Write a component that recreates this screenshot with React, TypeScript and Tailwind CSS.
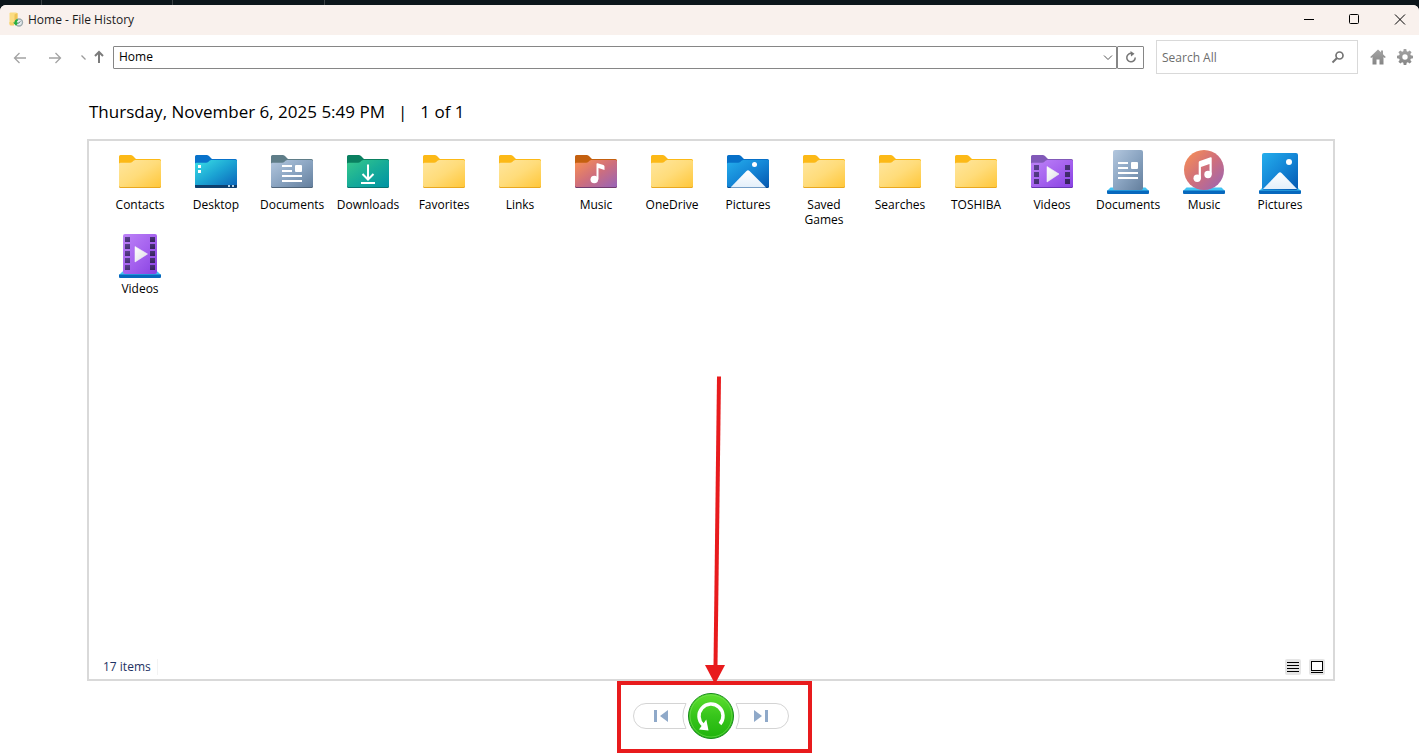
import React from "react"

type IconProps = { children?: React.ReactNode }

const places = [
  { name: "Contacts", icon: <Folder kind="plain" /> },
  { name: "Desktop", icon: <Folder kind="desktop" /> },
  { name: "Documents", icon: <Folder kind="documents" /> },
  { name: "Downloads", icon: <Folder kind="downloads" /> },
  { name: "Favorites", icon: <Folder kind="plain" /> },
  { name: "Links", icon: <Folder kind="plain" /> },
  { name: "Music", icon: <Folder kind="music" /> },
  { name: "OneDrive", icon: <Folder kind="plain" /> },
  { name: "Pictures", icon: <Folder kind="pictures" /> },
  { name: "Saved Games", icon: <Folder kind="plain" /> },
  { name: "Searches", icon: <Folder kind="plain" /> },
  { name: "TOSHIBA", icon: <Folder kind="plain" /> },
  { name: "Videos", icon: <Folder kind="videos" /> },
  { name: "Documents", icon: <DocumentsLibrary /> },
  { name: "Music", icon: <MusicLibrary /> },
  { name: "Pictures", icon: <PicturesLibrary /> },
  { name: "Videos", icon: <VideosLibrary /> }
]

// Shared gradients, referenced by id from every icon
const gradients = [
  { id: "g-plain", stops: ["#ffe69e", "#ffdc7a", "#ffc73a"] },
  { id: "g-desktop", stops: ["#3be0e6", "#1ba3d3", "#0a62b8"] },
  { id: "g-documents", stops: ["#b3c7de", "#8ba5c2", "#647f9d"] },
  { id: "g-downloads", stops: ["#37c98b", "#17ac98", "#0093a4"] },
  { id: "g-music", stops: ["#fb9251", "#cf6f7c", "#9763b8"] },
  { id: "g-pictures", stops: ["#25aeec", "#1486d6", "#0558b0"] },
  { id: "g-videos", stops: ["#bd83f7", "#a663ef", "#8741e2"] }
]

const folderColors: Record<string, { back: string; edge: string; front: string }> = {
  plain: { back: "#fcb917", edge: "#e9a820", front: "url(#g-plain)" },
  desktop: { back: "#0872ca", edge: "#0d3b66", front: "url(#g-desktop)" },
  documents: { back: "#5f7d88", edge: "#4f6479", front: "url(#g-documents)" },
  downloads: { back: "#0a8060", edge: "#07736f", front: "url(#g-downloads)" },
  music: { back: "#c4600f", edge: "#713b6d", front: "url(#g-music)" },
  pictures: { back: "#0770c8", edge: "#044a92", front: "url(#g-pictures)" },
  videos: { back: "#8159b8", edge: "#6934b4", front: "url(#g-videos)" }
}

function Gradients() {
  return (
    <svg className="absolute size-0" aria-hidden="true">
      <defs>
        {gradients.map((g) => (
          <linearGradient key={g.id} id={g.id} x1="0" y1="0" x2="1" y2="1">
            <stop offset="0" stopColor={g.stops[0]} />
            <stop offset="0.5" stopColor={g.stops[1]} />
            <stop offset="1" stopColor={g.stops[2]} />
          </linearGradient>
        ))}
        <linearGradient id="g-snow" x1="0" y1="0" x2="0" y2="1">
          <stop offset="0" stopColor="#ffffff" />
          <stop offset="1" stopColor="#e3effa" />
        </linearGradient>
        <linearGradient id="g-play" x1="0" y1="0" x2="1" y2="1">
          <stop offset="0" stopColor="#ffffff" />
          <stop offset="1" stopColor="#dcdce4" />
        </linearGradient>
        <linearGradient id="g-hole" x1="0" y1="0" x2="1" y2="1">
          <stop offset="0" stopColor="#5c4190" />
          <stop offset="1" stopColor="#34225c" />
        </linearGradient>
        <linearGradient id="g-restore" x1="0" y1="0" x2="0" y2="1">
          <stop offset="0" stopColor="#5ee02f" />
          <stop offset="0.5" stopColor="#37c51b" />
          <stop offset="1" stopColor="#1fb30c" />
        </linearGradient>
        <linearGradient id="g-gray" x1="0" y1="0" x2="0" y2="1">
          <stop offset="0" stopColor="#a4a4a4" />
          <stop offset="1" stopColor="#858585" />
        </linearGradient>
      </defs>
    </svg>
  )
}

function Icon48({ children }: IconProps) {
  return (
    <svg viewBox="0 0 48 48" className="size-12" aria-hidden="true">
      {children}
    </svg>
  )
}

function Glyph({ kind }: { kind: string }) {
  switch (kind) {
    case "desktop":
      return (
        <>
          <path d="M3 37H45V38.500Q45 40 43.500 40H4.500Q3 40 3 38.500Z" fill="#0d3f6e" />
          <path d="M6 17h3v3h-3zM6 22h3v3h-3z" fill="#fff" />
          <path d="M36 37h2v2h-2zM40 37h2v2h-2z" fill="#b5d2e8" />
        </>
      )
    case "documents":
      return (
        <>
          <path d="M14 17h10v2H14zM14 22h10v2H14zM14 27h20v2H14zM14 32h20v2H14z" fill="#fff" />
          <rect x="27" y="17" width="7" height="7" rx="1" fill="#fff" />
        </>
      )
    case "downloads":
      return (
        <path d="M24 16.500V31M18.500 26L24 31.500L29.500 26M17 35H31" fill="none" stroke="#fff" strokeWidth="2" />
      )
    case "music":
      return (
        <>
          <circle cx="22.300" cy="31.500" r="3.800" fill="#fff" />
          <path d="M24.500 31.500V16Q24.500 15 25.500 15.300L31.500 17Q32.500 17.500 32.500 18.500V22L26.500 20V31.500Z" fill="#fff" />
        </>
      )
    case "pictures":
      return (
        <>
          <path d="M6.500 39.500L22.500 23Q24 21.500 25.500 23L42 39.500Z" fill="url(#g-snow)" />
          <circle cx="30.500" cy="16.500" r="2.500" fill="#fff" />
        </>
      )
    case "videos":
      return (
        <>
          <path
            d="M6 17h5v5h-5zM6 24h5v5h-5zM6 31h5v5h-5zM37 17h5v5h-5zM37 24h5v5h-5zM37 31h5v5h-5z"
            fill="url(#g-hole)"
          />
          <path d="M19 18.500L31 26L19 34Z" fill="url(#g-play)" stroke="#f4f4f6" strokeWidth="0.600" strokeLinejoin="round" />
        </>
      )
    default:
      return null
  }
}

function Folder({ kind }: { kind: string }) {
  const colors = folderColors[kind]
  return (
    <Icon48>
      <path d="M3 8.500Q3 7 4.500 7H14.500Q16 7 17 8L20 11H43.500Q45 11 45 12.500V38H3Z" fill={colors.back} />
      <path d="M3 20H45V38.500Q45 40 43.500 40H4.500Q3 40 3 38.500Z" fill={colors.edge} />
      <path
        d="M3 16Q3 14.700 4.500 14.700H14Q15.500 14.700 16.500 13.800L17.500 12.800Q18.300 12 19.500 12H43.500Q45 12 45 13.500V37.500Q45 39 43.500 39H4.500Q3 39 3 37.500Z"
        fill={colors.front}
      />
      <Glyph kind={kind} />
    </Icon48>
  )
}

function Stand() {
  return (
    <>
      <path d="M6.500 39.500H41.500L45 43H3Z" fill="#43c4f4" />
      <path d="M3 42.500H45V45Q45 46 44 46H4Q3 46 3 45Z" fill="#0768bd" />
    </>
  )
}

function DocumentsLibrary() {
  return (
    <Icon48>
      <Stand />
      <rect x="9" y="2" width="30" height="40" rx="2" fill="url(#g-documents)" />
      <path d="M14 14h10v2H14zM14 19h10v2H14zM14 24h20v2H14zM14 29h20v2H14z" fill="#fff" />
      <rect x="27" y="14" width="7" height="7" rx="1" fill="#fff" />
    </Icon48>
  )
}

function MusicLibrary() {
  return (
    <Icon48>
      <Stand />
      <circle cx="24" cy="22" r="20" fill="url(#g-music)" />
      <circle cx="17.200" cy="30.300" r="3.700" fill="#fff" />
      <circle cx="28" cy="26.500" r="3.700" fill="#fff" />
      <path d="M18.700 30.300V14.500Q18.700 13.300 19.900 12.900L30.500 9.200Q31.700 8.900 31.700 10V26.500H29.500V16L20.900 19V30.300Z" fill="#fff" />
    </Icon48>
  )
}

function PicturesLibrary() {
  return (
    <Icon48>
      <Stand />
      <rect x="6" y="5" width="36" height="37" rx="2" fill="url(#g-pictures)" />
      <path d="M7 41L22.500 25Q24 23.500 25.500 25L41 41Z" fill="url(#g-snow)" />
      <circle cx="33" cy="14" r="3" fill="#fff" />
    </Icon48>
  )
}

function VideosLibrary() {
  return (
    <Icon48>
      <Stand />
      <rect x="7" y="2" width="34" height="40" rx="2" fill="url(#g-videos)" />
      {[5, 12, 19, 26, 33].map((y) => (
        <path key={y} d={`M9 ${y}h5v5h-5zM34 ${y}h5v5h-5z`} fill="url(#g-hole)" />
      ))}
      <path d="M19 14.500L31.500 22L19 30Z" fill="url(#g-play)" stroke="#f4f4f6" strokeWidth="0.600" strokeLinejoin="round" />
    </Icon48>
  )
}

function AppIcon() {
  return (
    <svg viewBox="0 0 16 16" className="size-4" aria-hidden="true">
      <path d="M1.500 1.500Q1.500 0.500 2.500 0.500H8Q9.500 0.500 9.500 2V12H1.500Z" fill="#fbdc82" />
      <path d="M6.500 2.500L9.500 1V9L6.500 12.500Z" fill="#eec355" />
      <path d="M1.500 10V12.500Q1.500 13.500 3 13.500H6V11Z" fill="#f7d06a" />
      <circle cx="11" cy="10.500" r="3.500" fill="#e4ebee" stroke="#a0abae" strokeWidth="1.400" />
      <path d="M9.500 7Q6.500 7.500 6.500 10.500H5L8 13.800L10.500 10.500H8.700Q8.800 9 10 8.600Z" fill="#27ad40" />
      <path d="M10 11.500L12.500 9.500" fill="none" stroke="#6e7b80" />
    </svg>
  )
}

function TitleBar() {
  return (
    <header className="flex h-[30px] items-center bg-[#f9f1ed] pl-2">
      <AppIcon />
      <h1 className="ml-1 flex-1 text-[12px] leading-4 text-[#1b1b1b]">Home - File History</h1>
      <button type="button" aria-label="Minimize" className="flex h-full w-[45px] items-center justify-center">
        <svg viewBox="0 0 12 12" className="size-3" aria-hidden="true">
          <path d="M0 5.500H10" stroke="#000" />
        </svg>
      </button>
      <button type="button" aria-label="Maximize" className="flex h-full w-[45px] items-center justify-center">
        <svg viewBox="0 0 12 12" className="size-3" fill="none" stroke="#000" aria-hidden="true">
          <rect x="0.500" y="0.500" width="9" height="9" rx="1" />
        </svg>
      </button>
      <button type="button" aria-label="Close" className="mr-[-3px] flex h-full w-[45px] items-center justify-center">
        <svg viewBox="0 0 12 12" className="size-3" stroke="#000" aria-hidden="true">
          <path d="M1 0.500L11 10.500M11 0.500L1 10.500" />
        </svg>
      </button>
    </header>
  )
}

function Toolbar() {
  return (
    <nav className="flex h-[44px] items-center pl-[13px] pr-[6px]">
      <button type="button" aria-label="Back">
        <svg viewBox="0 0 14 14" className="size-[14px]" fill="none" stroke="#a3a3a3" aria-hidden="true">
          <path d="M1.500 8H13M6.500 3L1.500 8L6.500 13" strokeWidth="1.300" />
        </svg>
      </button>
      <button type="button" aria-label="Forward" className="ml-[21px]">
        <svg viewBox="0 0 14 14" className="size-[14px]" fill="none" stroke="#a3a3a3" aria-hidden="true">
          <path d="M1 8H12.500M7.500 3L12.500 8L7.500 13" strokeWidth="1.300" />
        </svg>
      </button>
      <button type="button" aria-label="Recent locations" className="ml-[18px]">
        <svg viewBox="0 0 8 8" className="size-2" aria-hidden="true">
          <path d="M1.500 2.500L5.500 6.500" stroke="#9a9a9a" strokeWidth="1.200" />
        </svg>
      </button>
      <button type="button" aria-label="Up" className="ml-[5px]">
        <svg viewBox="0 0 12 14" className="h-[14px] w-3" fill="none" stroke="#7b7b7b" aria-hidden="true">
          <path d="M6 13V2M2 6L6 2L10 6" strokeWidth="2" />
        </svg>
      </button>
      <div className="ml-2 flex h-[23px] flex-1 items-center rounded-[1px] border border-[#868686]">
        <input
          type="text"
          aria-label="Address"
          defaultValue="Home"
          className="h-full min-w-0 flex-1 pb-px pl-[5px] text-[12px] leading-4 text-black outline-none"
        />
        <button type="button" aria-label="Previous locations" className="flex h-full w-4 items-center justify-center">
          <svg viewBox="0 0 10 10" className="size-[10px]" fill="none" stroke="#555" aria-hidden="true">
            <path d="M1 3.500L5 7.500L9 3.500" />
          </svg>
        </button>
      </div>
      <button
        type="button"
        aria-label="Refresh"
        className="flex h-[23px] w-[27px] items-center justify-center rounded-[1px] border border-[#868686]"
      >
        <svg viewBox="0 0 12 12" className="size-3" fill="none" aria-hidden="true">
          <path d="M7 2.500A4.200 4.200 0 1 0 10.200 6.500" stroke="#767676" strokeWidth="1.500" />
          <path d="M5.500 0L9.500 2.800L6 5.500Z" fill="#767676" />
        </svg>
      </button>
      <form className="ml-3 flex h-[34px] w-[202px] items-center border border-[#d9d9d9] pr-3" onSubmit={(e) => e.preventDefault()}>
        <input
          type="search"
          aria-label="Search All"
          placeholder="Search All"
          className="h-full min-w-0 flex-1 pl-[5px] text-[12px] leading-4 outline-none placeholder:text-[#6d6d6d]"
        />
        <button type="submit" aria-label="Search">
          <svg viewBox="0 0 14 14" className="size-[14px]" fill="none" stroke="#757575" aria-hidden="true">
            <circle cx="8.500" cy="5.500" r="3.500" strokeWidth="1.700" />
            <path d="M6 8L1.500 12.500" strokeWidth="2" />
          </svg>
        </button>
      </form>
      <button type="button" aria-label="Home" className="ml-3">
        <svg viewBox="0 0 16 16" className="size-4" fill="url(#g-gray)" aria-hidden="true">
          <path d="M8 0.500L11 3.300V1.500H13V5.200L15.800 8L14.800 9L13.500 8V15.500H9.500V10.500H6.500V15.500H2.500V8L1.200 9L0.200 8Z" />
        </svg>
      </button>
      <button type="button" aria-label="Settings" className="ml-[11px]">
        <svg viewBox="0 0 16 16" className="size-4" aria-hidden="true">
          <path
            fill="url(#g-gray)"
            fillRule="evenodd"
            d="M6.700 0H9.300L9.700 2.200L10.900 2.700L12.700 1.400L14.600 3.300L13.300 5.100L13.800 6.300L16 6.700V9.300L13.800 9.700L13.300 10.900L14.600 12.700L12.700 14.600L10.900 13.300L9.700 13.800L9.300 16H6.700L6.300 13.800L5.100 13.300L3.300 14.600L1.400 12.700L2.700 10.900L2.200 9.700L0 9.300V6.700L2.200 6.300L2.700 5.100L1.400 3.300L3.300 1.400L5.100 2.700L6.300 2.200ZM8 5.300A2.700 2.700 0 1 0 8 10.700A2.700 2.700 0 1 0 8 5.300Z"
          />
        </svg>
      </button>
    </nav>
  )
}

function StatusBar() {
  return (
    <footer className="flex h-6 items-center pl-[14px] pr-2">
      <span className="w-[55px] border-r border-[#f3f3f3] text-[12px] leading-4 text-[#1e3263]">17 items</span>
      <button type="button" aria-label="Details view" className="ml-auto flex size-4 items-center justify-center rounded-[2px] bg-[#e5e5e5]">
        <svg viewBox="0 0 12 12" className="size-3" stroke="#000" aria-hidden="true">
          <path d="M0 1.500H12M0 4.500H12M0 7.500H12M0 10.500H12" />
        </svg>
      </button>
      <button type="button" aria-label="Large icons view" className="ml-2 flex size-4 items-center justify-center rounded-[2px] bg-[#e5e5e5]">
        <svg viewBox="0 0 12 12" className="size-3" stroke="#000" aria-hidden="true">
          <rect x="0.500" y="0.500" width="11" height="9" fill="#fff" />
          <path d="M0 11.500H12" />
        </svg>
      </button>
    </footer>
  )
}

function Controls() {
  return (
    <div className="relative flex h-[72px] w-[195px] shrink-0 items-center justify-center pb-[2px] pr-[7px]">
      <button type="button" aria-label="Previous version">
        <svg viewBox="0 0 55 26" className="h-[26px] w-[55px]" fill="none" aria-hidden="true">
          <path d="M53 0.500H13A12.500 12.500 0 0 0 13 25.500H53A28 28 0 0 1 53 0.500Z" stroke="#d4d4d4" />
          <path d="M21 7h3v12h-3zM35 7V19L27 13Z" fill="#8fa9c9" />
        </svg>
      </button>
      <button type="button" aria-label="Restore to original location">
        <svg viewBox="0 0 46 46" className="size-[46px]" aria-hidden="true">
          <circle cx="23" cy="23" r="22.500" fill="url(#g-restore)" stroke="#16891b" />
          <circle cx="23" cy="23" r="21" fill="none" stroke="#7be05c" strokeOpacity="0.600" />
          <path d="M32 31A12 12 0 1 0 15 32" fill="none" stroke="#fff" strokeWidth="3.500" />
          <path d="M11 36.500L18.300 26.500L20.500 37.500Z" fill="#fff" />
        </svg>
      </button>
      <button type="button" aria-label="Next version">
        <svg viewBox="0 0 55 26" className="h-[26px] w-[55px]" fill="none" aria-hidden="true">
          <path d="M2 0.500H42A12.500 12.500 0 0 1 42 25.500H2A28 28 0 0 0 2 0.500Z" stroke="#d4d4d4" />
          <path d="M31 7h3v12h-3zM20 7V19L28 13Z" fill="#8fa9c9" />
        </svg>
      </button>
      {/* Highlight box and the arrow pointing down at it */}
      <div className="pointer-events-none absolute inset-0 border-4 border-[#e81b1d]" />
      <svg
        viewBox="0 0 24 308"
        className="pointer-events-none absolute bottom-[69px] left-[86px] h-[308px] w-6"
        aria-hidden="true"
      >
        <path d="M16 0.500L12.500 290" stroke="#e81b1d" strokeWidth="4" />
        <path d="M2 289H22L12 308Z" fill="#e81b1d" />
      </svg>
    </div>
  )
}

export default function App() {
  return (
    <div className="flex min-h-screen flex-col bg-[#0c161b] font-['Open_Sans','Noto_Sans',sans-serif]">
      <Gradients />
      {/* Window behind */}
      <div className="flex h-[5px] shrink-0">
        <div className="w-[42px] border-r border-[#3a4145]" />
        <div className="w-[131px] border-r border-[#3a4145]" />
        <div className="w-[152px] border-r border-[#3a4145]" />
      </div>
      <div className="flex flex-1 flex-col overflow-hidden rounded-t-md bg-white">
        <TitleBar />
        <Toolbar />
        <main className="flex flex-1 flex-col pl-[87px] pr-[84px]">
          <h2 className="flex h-[60px] items-center pl-[2px] pt-[5px] text-[17px] leading-6 text-black">
            <span>Thursday, November 6, 2025 5:49 PM</span>
            <span className="mx-[13px]">|</span>
            <span>1 of 1</span>
          </h2>
          <section className="flex flex-1 flex-col border-2 border-[#d9d9d9]">
            <ul className="flex flex-1 flex-wrap content-start pl-[13px] pt-[7px]">
              {places.map((place, index) => (
                <li key={index} className="flex h-[84px] w-[76px] flex-col items-center text-center">
                  {place.icon}
                  <span className="mt-px w-16 text-[12px] leading-[15px] text-black">{place.name}</span>
                </li>
              ))}
            </ul>
            <StatusBar />
          </section>
          <div className="flex justify-center pl-[7px]">
            <Controls />
          </div>
        </main>
      </div>
    </div>
  )
}
